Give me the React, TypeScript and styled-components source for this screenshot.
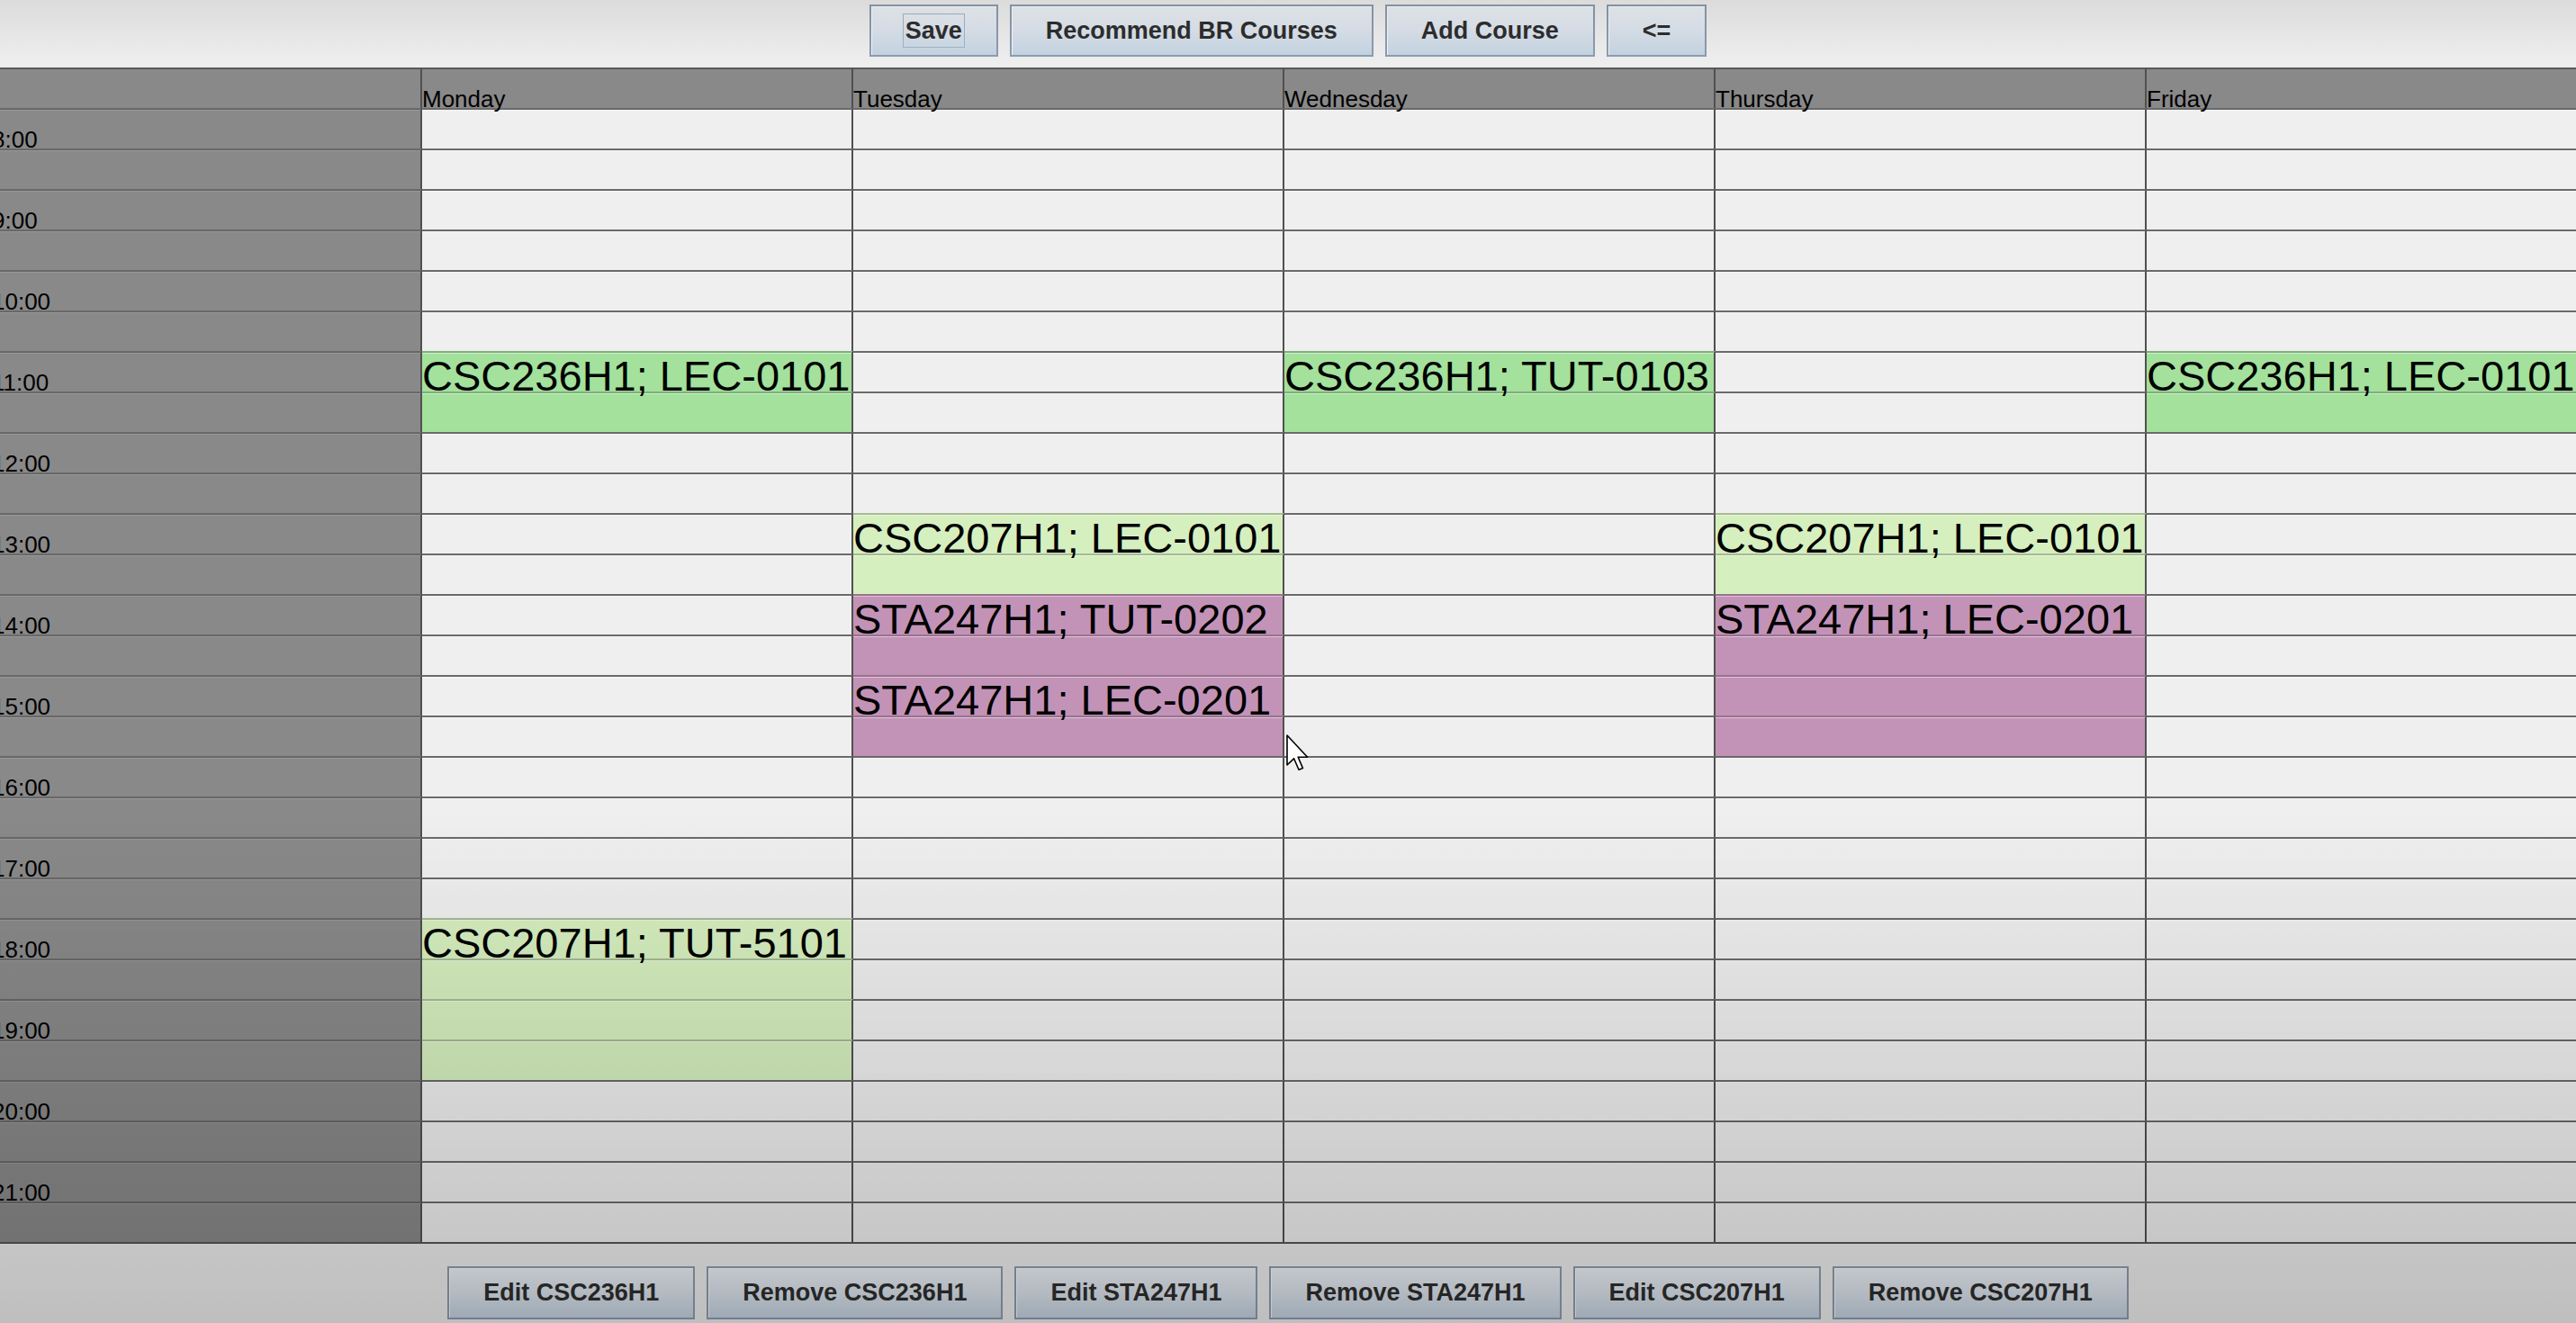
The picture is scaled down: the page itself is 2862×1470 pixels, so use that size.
import React from "react";
import styled, { createGlobalStyle } from "styled-components";

const GlobalStyle = createGlobalStyle`
  html, body {
    margin: 0;
    padding: 0;
  }
  body {
    background: #eeeeee;
    overflow: hidden;
  }
`;

//----------------- timetable data
const DAYS = ["Monday", "Tuesday", "Wednesday", "Thursday", "Friday"];
const START_HOUR = 8;
const ROW_COUNT = 28; // 8:00 - 21:30, one row per half hour

interface Session {
  day: number;
  start: number; // row index
  span: number;
  label: string;
  color: string;
}

const GREEN = "#a3e19d";
const LIME = "#d6efbf";
const MAUVE = "#c393b7";

const sessions: Session[] = [
  { day: 0, start: 6, span: 2, label: "CSC236H1; LEC-0101", color: GREEN },
  { day: 0, start: 20, span: 4, label: "CSC207H1; TUT-5101", color: LIME },
  { day: 1, start: 10, span: 2, label: "CSC207H1; LEC-0101", color: LIME },
  { day: 1, start: 12, span: 2, label: "STA247H1; TUT-0202", color: MAUVE },
  { day: 1, start: 14, span: 2, label: "STA247H1; LEC-0201", color: MAUVE },
  { day: 2, start: 6, span: 2, label: "CSC236H1; TUT-0103", color: GREEN },
  { day: 3, start: 10, span: 2, label: "CSC207H1; LEC-0101", color: LIME },
  { day: 3, start: 12, span: 4, label: "STA247H1; LEC-0201", color: MAUVE },
  { day: 4, start: 6, span: 2, label: "CSC236H1; LEC-0101", color: GREEN },
];

const topButtons = ["Save", "Recommend BR Courses", "Add Course", "<="];
const bottomButtons = [
  "Edit CSC236H1",
  "Remove CSC236H1",
  "Edit STA247H1",
  "Remove STA247H1",
  "Edit CSC207H1",
  "Remove CSC207H1",
];
//-----------------

export default function App() {
  return (
    <>
      <GlobalStyle />
      <Screen>
        <ButtonBar $padTop={5} $height={75}>
          {topButtons.map((b) => (
            <Button key={b} $height={58}>
              {b === "Save" ? <FocusRing>{b}</FocusRing> : b}
            </Button>
          ))}
        </ButtonBar>
        <Timetable />
        <ButtonBar $padTop={25} $height={88}>
          {bottomButtons.map((b) => (
            <Button key={b} $height={59}>
              {b}
            </Button>
          ))}
        </ButtonBar>
        <Cursor />
      </Screen>
    </>
  );
}

// the whole capture gets darker toward the bottom, and a little at the very top
const Screen = styled.div`
  position: relative;
  width: 2862px;
  height: 1470px;
  overflow: hidden;
  background: #eeeeee;

  &::after {
    content: "";
    position: absolute;
    inset: 0;
    pointer-events: none;
    z-index: 10;
    background: linear-gradient(
      to bottom,
      rgba(0, 0, 0, 0.08) 0px,
      rgba(0, 0, 0, 0) 70px,
      rgba(0, 0, 0, 0) 900px,
      rgba(0, 0, 0, 0.2) 1470px
    );
  }
`;

const ButtonBar = styled.div<{ $padTop: number; $height: number }>`
  box-sizing: border-box;
  height: ${(p) => p.$height}px;
  padding-top: ${(p) => p.$padTop}px;
  display: flex;
  justify-content: center;
  align-items: flex-start;
  gap: 13px;
`;

const Button = styled.button<{ $height: number }>`
  height: ${(p) => p.$height}px;
  padding: 0 38px;
  margin: 0;
  border: 2px solid #8c9db0;
  border-radius: 0;
  background: linear-gradient(to bottom, #eef2f6 0%, #dde5ee 50%, #c4d3e2 100%);
  box-shadow: inset 1px 1px 0 rgba(255, 255, 255, 0.8);
  font-family: "Liberation Sans", Arial, sans-serif;
  font-weight: bold;
  font-size: 27px;
  color: #2e2e2e;
  white-space: nowrap;
`;

const FocusRing = styled.span`
  display: inline-block;
  line-height: 36px;
  padding: 0 2px;
  margin: 0 -3px;
  border: 1px solid #a2b5c8;
`;

const Timetable = () => {
  const rows = Array.from({ length: ROW_COUNT }, (_, r) => r);
  return (
    <Table>
      <HeaderCell />
      {DAYS.map((d) => (
        <HeaderCell key={d}>{d}</HeaderCell>
      ))}
      {rows.map((r) => (
        <React.Fragment key={r}>
          <TimeCell>{r % 2 === 0 ? `${START_HOUR + r / 2}:00` : ""}</TimeCell>
          {DAYS.map((_, d) => {
            const s = sessions.find(
              (x) => x.day === d && r >= x.start && r < x.start + x.span
            );
            const labelled = !!s && s.start === r;
            return (
              <SlotCell key={d} $color={s?.color} $labelled={labelled}>
                {labelled ? s!.label : ""}
              </SlotCell>
            );
          })}
        </React.Fragment>
      ))}
    </Table>
  );
};

const Table = styled.div`
  display: grid;
  grid-template-columns: repeat(6, 479px);
  grid-auto-rows: 45px;
  margin-left: -10px;
  border-bottom: 2px solid #555555;
  font-family: "Liberation Sans", Arial, sans-serif;
  color: #000000;
`;

const HeaderCell = styled.div`
  box-sizing: border-box;
  background: #898989;
  border-top: 2px solid #5a5a5a;
  border-right: 2px solid #505050;
  padding-top: 20px;
  font-size: 26px;
  line-height: 26px;
  white-space: nowrap;
  z-index: 1;
`;

const TimeCell = styled.div`
  box-sizing: border-box;
  background: #898989;
  border-top: 2px solid #686868;
  border-right: 2px solid #505050;
  box-shadow: inset 0 1px 0 rgba(255, 255, 255, 0.12);
  padding: 20px 0 0 1px;
  font-size: 26px;
  line-height: 26px;
  white-space: nowrap;
`;

// text is clipped at the column edge but the descenders may hang into the next row
const SlotCell = styled.div<{ $color?: string; $labelled: boolean }>`
  box-sizing: border-box;
  background: ${(p) => p.$color ?? "#efefef"};
  border-top: 2px solid ${(p) => (p.$color ? "rgba(0, 0, 0, 0.22)" : "#6a6a6a")};
  border-right: 2px solid #505050;
  box-shadow: inset 0 1px 0 rgba(255, 255, 255, 0.45);
  padding-top: 2px;
  font-size: 47px;
  line-height: 47px;
  white-space: nowrap;
  overflow-x: clip;
  overflow-y: visible;
  z-index: ${(p) => (p.$labelled ? 1 : 0)};
`;

const CursorWrap = styled.div`
  position: absolute;
  left: 1429px;
  top: 816px;
  width: 26px;
  height: 42px;
  z-index: 11;
  pointer-events: none;
`;

const Cursor = () => (
  <CursorWrap>
    <svg width="26" height="42" viewBox="0 0 13 21">
      <path
        d="M0.5 0.5 L0.5 17 L4.3 13.4 L7 19.6 L9.2 18.7 L6.6 12.6 L11.8 12.6 Z"
        fill="#ffffff"
        stroke="#000000"
        strokeWidth="0.8"
        strokeLinejoin="round"
      />
    </svg>
  </CursorWrap>
);
